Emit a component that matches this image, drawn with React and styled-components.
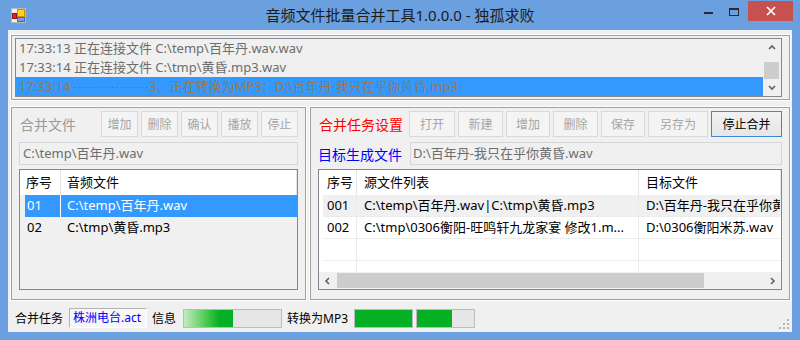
import React from "react";
import styled, { createGlobalStyle, css } from "styled-components";

const FONT = `"Noto Sans", "Noto Sans CJK SC", sans-serif`;

const GlobalStyle = createGlobalStyle`
  html, body { margin: 0; padding: 0; }
  body { font-family: ${FONT}; background: #ffffff; }
  *, *::before, *::after { box-sizing: border-box; }
`;

const sunken = css`
  border: 1px solid #a0a0a0;
  box-shadow: 0 0 0 1px #ffffff;
`;

const Window = styled.div`
  width: 800px;
  height: 340px;
  background: #6aa0df;
  display: flex;
  flex-direction: column;
  overflow: hidden;
  font-family: ${FONT};
`;

const TitleBar = styled.div`
  height: 30px;
  flex: none;
  display: grid;
  grid-template-columns: 1fr auto 1fr;
  align-items: start;
`;

const AppIcon = styled.svg`
  display: block;
  margin: 8px 0 0 11px;
`;

const Title = styled.div`
  font-size: 15px;
  line-height: 30px;
  color: #1b1b1b;
  white-space: nowrap;
`;

const Controls = styled.div`
  justify-self: end;
  display: flex;
  align-items: flex-start;
  margin-right: 7px;
`;

const CtlButton = styled.div`
  width: ${(p) => p.$w}px;
  height: 21px;
  display: flex;
  justify-content: center;
  align-items: flex-start;
  ${(p) =>
    p.$close &&
    css`
      background: #c75050;
      height: 20px;
      margin: 1px 0 0 1px;
      align-items: center;
    `}
`;

const MinGlyph = styled.span`
  width: 9px;
  height: 2px;
  margin-top: 12px;
  background: #2a2a2a;
`;

const MaxGlyph = styled.span`
  width: 10px;
  height: 8px;
  margin-top: 8px;
  border: 1px solid #2a2a2a;
  border-top-width: 2px;
`;

const Client = styled.div`
  flex: 1;
  min-width: 0;
  margin: 0 8px 8px;
  background: #f0f0f0;
  display: flex;
  flex-direction: column;
  padding: 5px 2px 0 3px;
`;

const LogPanel = styled.div`
  ${sunken};
  height: 65px;
  flex: none;
  padding: 2px 7px 2px 3px;
  display: flex;
`;

const ListBox = styled.div`
  flex: 1;
  min-width: 0;
  border: 1px solid #828790;
  background: #f0f0f0;
  display: flex;
`;

const LogRows = styled.div`
  flex: 1;
  min-width: 0;
`;

const LogRow = styled.div`
  height: 19px;
  line-height: 19px;
  padding-left: 3px;
  font-size: 13px;
  white-space: nowrap;
  overflow: hidden;
  color: ${(p) => (p.$selected ? "#93785f" : "#6d6d6d")};
  background: ${(p) => (p.$selected ? "#3399ff" : "transparent")};
`;

const VScroll = styled.div`
  width: 17px;
  flex: none;
  margin-right: 1px;
  background: #f0f0f0;
  display: flex;
  flex-direction: column;
`;

const HScroll = styled.div`
  height: 17px;
  flex: none;
  background: #f0f0f0;
  display: flex;
`;

const ArrowBox = styled.div`
  width: 17px;
  height: 17px;
  flex: none;
  display: flex;
  align-items: center;
  justify-content: center;
`;

const VThumb = styled.div`
  height: 17px;
  margin: 6px 1px 0;
  background: #cdcdcd;
`;

const HThumb = styled.div`
  width: ${(p) => p.$w}px;
  flex: none;
  margin: 1px 0 1px 1px;
  background: #cdcdcd;
`;

const Spacer = styled.div`
  flex: 1;
`;

const PanelsRow = styled.div`
  height: 193px;
  flex: none;
  margin-top: 7px;
  display: flex;
  gap: 4px;
`;

const Panel = styled.div`
  ${sunken};
  ${(p) => (p.$w ? `width: ${p.$w}px; flex: none;` : "flex: 1 1 0;")}
  min-width: 0;
  padding: 3px 7px 9px 7px;
  display: flex;
  flex-direction: column;
`;

const Toolbar = styled.div`
  height: 26px;
  flex: none;
  display: flex;
  align-items: center;
`;

const PanelLabel = styled.div`
  flex: 1;
  min-width: 0;
  font-size: 14px;
  color: ${(p) => p.$color};
  white-space: nowrap;
  padding-left: 1px;
`;

const ButtonGroup = styled.div`
  display: flex;
  flex: none;
  gap: 3px;
`;

const Button = styled.div`
  width: ${(p) => p.$w}px;
  height: 26px;
  display: flex;
  align-items: center;
  justify-content: center;
  font-size: 12px;
  white-space: nowrap;
  border: 1px solid #d9d9d9;
  background: #f4f4f4;
  color: #a6a6a6;
  ${(p) =>
    p.$active &&
    css`
      border-color: #3d86d6;
      background: linear-gradient(#f2f2f2, #e6e6e6);
      color: #000;
    `}
`;

const FieldRow = styled.div`
  height: 23px;
  flex: none;
  margin: 5px 0 4px;
  display: flex;
  align-items: center;
`;

const FieldLabel = styled.div`
  width: 92px;
  flex: none;
  font-size: 14px;
  color: #0000ff;
  white-space: nowrap;
`;

const TextBox = styled.div`
  flex: 1;
  min-width: 0;
  height: 23px;
  border: 1px solid #d6d6d6;
  background: #f0f0f0;
  color: #6d6d6d;
  font-size: 13px;
  line-height: 21px;
  padding-left: ${(p) => p.$pad}px;
  white-space: nowrap;
  overflow: hidden;
`;

const ListView = styled.div`
  flex: 1;
  min-height: 0;
  min-width: 0;
  border: 1px solid #828790;
  background: ${(p) => p.$bg};
  display: flex;
  flex-direction: column;
  overflow: hidden;
`;

const Header = styled.div`
  height: 25px;
  flex: none;
  display: flex;
  background: #ffffff;
`;

const HeadCell = styled.div`
  flex: ${(p) => (p.$w ? `0 0 ${p.$w}px` : "1 1 0")};
  min-width: 0;
  padding-left: ${(p) => p.$pad}px;
  border-right: 1px solid #e5e5e5;
  font-size: 13px;
  line-height: 25px;
  color: #000;
  white-space: nowrap;
  overflow: hidden;
`;

const Body = styled.div`
  flex: 1;
  min-height: 0;
  overflow: hidden;
`;

const Row = styled.div`
  height: 22px;
  display: flex;
  margin-left: ${(p) => p.$inset}px;
  background: ${(p) => p.$bg || "transparent"};
  color: ${(p) => p.$color || "#000"};
  ${(p) =>
    p.$grid &&
    css`
      border-bottom: 1px solid #ececec;
    `}
`;

const Cell = styled.div`
  flex: ${(p) => (p.$w ? `0 0 ${p.$w}px` : "1 1 0")};
  min-width: 0;
  padding-left: ${(p) => p.$pad || 0}px;
  border-right: 1px solid ${(p) => p.$line || "transparent"};
  font-size: 13px;
  line-height: 21px;
  white-space: nowrap;
  overflow: hidden;
`;

const StatusBar = styled.div`
  height: 26px;
  flex: none;
  margin-top: 5px;
  padding-left: 4px;
  display: flex;
  align-items: center;
  font-size: 12px;
  color: #000;
`;

const StatusText = styled.span`
  margin-left: ${(p) => p.$ml || 0}px;
  white-space: nowrap;
`;

const StatusField = styled.div`
  width: 78px;
  height: 20px;
  margin-left: 6px;
  border: 1px solid;
  border-color: #b4b4b4 #ffffff #ffffff #b4b4b4;
  background: #f7f7f7;
  color: #0000ff;
  line-height: 18px;
  padding-left: 3px;
  white-space: nowrap;
  overflow: hidden;
`;

const Progress = styled.div`
  width: ${(p) => p.$w}px;
  height: 19px;
  margin-left: ${(p) => p.$ml}px;
  border: 1px solid #bcbcbc;
  background: #e6e6e6;
  display: flex;
`;

const ProgressFill = styled.div`
  background: ${(p) =>
    p.$marquee
      ? "linear-gradient(90deg, #c2ecc2 0%, #5ccd5c 40%, #06b025 72%, #06b025 100%)"
      : "#06b025"};
`;

const Grip = styled.svg`
  display: block;
  margin-left: auto;
  align-self: flex-end;
  margin-bottom: 1px;
`;

const Chevron = ({ dir }) => {
  const d = {
    up: "M1 5 L4 2 L7 5",
    down: "M1 2 L4 5 L7 2",
    left: "M5 1 L2 4 L5 7",
    right: "M2 1 L5 4 L2 7",
  }[dir];
  return (
    <svg width="8" height="8" viewBox="0 0 8 8">
      <path d={d} fill="none" stroke="#606060" strokeWidth="1.6" />
    </svg>
  );
};

export default function App() {
  return (
    <>
      <GlobalStyle />
      <Window>
        <TitleBar>
          <AppIcon width="15" height="15" viewBox="0 0 15 15">
            <rect x="0.5" y="0.5" width="14" height="14" fill="#f2f2f2" stroke="#b8b8b8" />
            <rect x="6.5" y="1.5" width="7" height="7" fill="#ffd21e" stroke="#d48a00" />
            <rect x="1.5" y="5.5" width="4" height="5" fill="#e02424" stroke="#9c0f0f" />
            <rect x="6.5" y="9.5" width="7" height="4" fill="#6f9fe8" stroke="#3b6cc0" />
          </AppIcon>
          <Title>音频文件批量合并工具1.0.0.0 - 独孤求败</Title>
          <Controls>
            <CtlButton $w={26}>
              <MinGlyph />
            </CtlButton>
            <CtlButton $w={26}>
              <MaxGlyph />
            </CtlButton>
            <CtlButton $w={45} $close>
              <svg width="10" height="10" viewBox="0 0 10 10">
                <path d="M1 1 L9 9 M9 1 L1 9" stroke="#ffffff" strokeWidth="1.7" />
              </svg>
            </CtlButton>
          </Controls>
        </TitleBar>

        <Client>
          <LogPanel>
            <ListBox>
              <LogRows>
                <LogRow>{"17:33:13 正在连接文件 C:\\temp\\百年丹.wav.wav"}</LogRow>
                <LogRow>{"17:33:14 正在连接文件 C:\\tmp\\黄昏.mp3.wav"}</LogRow>
                <LogRow $selected>
                  {"17:33:14 ------------------3、正在转换为MP3：D:\\百年丹-我只在乎你黄昏.mp3"}
                </LogRow>
              </LogRows>
              <VScroll>
                <ArrowBox>
                  <Chevron dir="up" />
                </ArrowBox>
                <VThumb />
                <Spacer />
                <ArrowBox>
                  <Chevron dir="down" />
                </ArrowBox>
              </VScroll>
            </ListBox>
          </LogPanel>

          <PanelsRow>
            <Panel $w={295}>
              <Toolbar>
                <PanelLabel $color="#9a9a9a">合并文件</PanelLabel>
                <ButtonGroup>
                  <Button $w={37}>增加</Button>
                  <Button $w={37}>删除</Button>
                  <Button $w={37}>确认</Button>
                  <Button $w={37}>播放</Button>
                  <Button $w={37}>停止</Button>
                </ButtonGroup>
              </Toolbar>
              <FieldRow>
                <TextBox $pad={3}>{"C:\\temp\\百年丹.wav"}</TextBox>
              </FieldRow>
              <ListView $bg="#f0f0f0">
                <Header>
                  <HeadCell $w={41} $pad={6}>序号</HeadCell>
                  <HeadCell $pad={6}>音频文件</HeadCell>
                </Header>
                <Body>
                  <Row $inset={5} $bg="#3399ff" $color="#ffffff">
                    <Cell $w={36} $pad={2} $line="#ffffff">01</Cell>
                    <Cell $pad={6}>{"C:\\temp\\百年丹.wav"}</Cell>
                  </Row>
                  <Row $inset={5}>
                    <Cell $w={36} $pad={2}>02</Cell>
                    <Cell $pad={6}>{"C:\\tmp\\黄昏.mp3"}</Cell>
                  </Row>
                </Body>
              </ListView>
            </Panel>

            <Panel>
              <Toolbar>
                <PanelLabel $color="#ff0000">合并任务设置</PanelLabel>
                <ButtonGroup>
                  <Button $w={46}>打开</Button>
                  <Button $w={45}>新建</Button>
                  <Button $w={44}>增加</Button>
                  <Button $w={45}>删除</Button>
                  <Button $w={44}>保存</Button>
                  <Button $w={60}>另存为</Button>
                  <Button $w={71} $active>停止合并</Button>
                </ButtonGroup>
              </Toolbar>
              <FieldRow>
                <FieldLabel>目标生成文件</FieldLabel>
                <TextBox $pad={2}>{"D:\\百年丹-我只在乎你黄昏.wav"}</TextBox>
              </FieldRow>
              <ListView $bg="#ffffff">
                <Header>
                  <HeadCell $w={38} $pad={8}>序号</HeadCell>
                  <HeadCell $w={282} $pad={7}>源文件列表</HeadCell>
                  <HeadCell $pad={7}>目标文件</HeadCell>
                </Header>
                <Body>
                  <Row $inset={4} $grid $bg="#f0f0f0">
                    <Cell $w={34} $pad={4} $line="#ececec">001</Cell>
                    <Cell $w={282} $pad={7} $line="#ececec">
                      {"C:\\temp\\百年丹.wav|C:\\tmp\\黄昏.mp3"}
                    </Cell>
                    <Cell $pad={7}>{"D:\\百年丹-我只在乎你黄昏.wav"}</Cell>
                  </Row>
                  <Row $inset={4} $grid>
                    <Cell $w={34} $pad={4} $line="#ececec">002</Cell>
                    <Cell $w={282} $pad={7} $line="#ececec">
                      {"C:\\tmp\\0306衡阳-旺鸣轩九龙家宴 修改1.m..."}
                    </Cell>
                    <Cell $pad={7}>{"D:\\0306衡阳米苏.wav"}</Cell>
                  </Row>
                  <Row $inset={4} $grid>
                    <Cell $w={34} $line="#ececec" />
                    <Cell $w={282} $line="#ececec" />
                    <Cell />
                  </Row>
                  <Row $inset={4} $grid>
                    <Cell $w={34} $line="#ececec" />
                    <Cell $w={282} $line="#ececec" />
                    <Cell />
                  </Row>
                </Body>
                <HScroll>
                  <ArrowBox>
                    <Chevron dir="left" />
                  </ArrowBox>
                  <HThumb $w={367} />
                  <Spacer />
                  <ArrowBox>
                    <Chevron dir="right" />
                  </ArrowBox>
                </HScroll>
              </ListView>
            </Panel>
          </PanelsRow>

          <StatusBar>
            <StatusText>合并任务</StatusText>
            <StatusField>株洲电台.act</StatusField>
            <StatusText $ml={5}>信息</StatusText>
            <Progress $w={99} $ml={7}>
              <ProgressFill $marquee style={{ width: "50%" }} />
            </Progress>
            <StatusText $ml={5}>转换为MP3</StatusText>
            <Progress $w={59} $ml={6}>
              <ProgressFill style={{ width: "100%" }} />
            </Progress>
            <Progress $w={59} $ml={3}>
              <ProgressFill style={{ width: "61%" }} />
            </Progress>
            <Grip width="12" height="12" viewBox="0 0 12 12">
              {[
                [9, 1],
                [5, 5],
                [9, 5],
                [1, 9],
                [5, 9],
                [9, 9],
              ].map(([x, y]) => (
                <rect key={`${x}-${y}`} x={x} y={y} width="2" height="2" fill="#b5b5b5" />
              ))}
            </Grip>
          </StatusBar>
        </Client>
      </Window>
    </>
  );
}
